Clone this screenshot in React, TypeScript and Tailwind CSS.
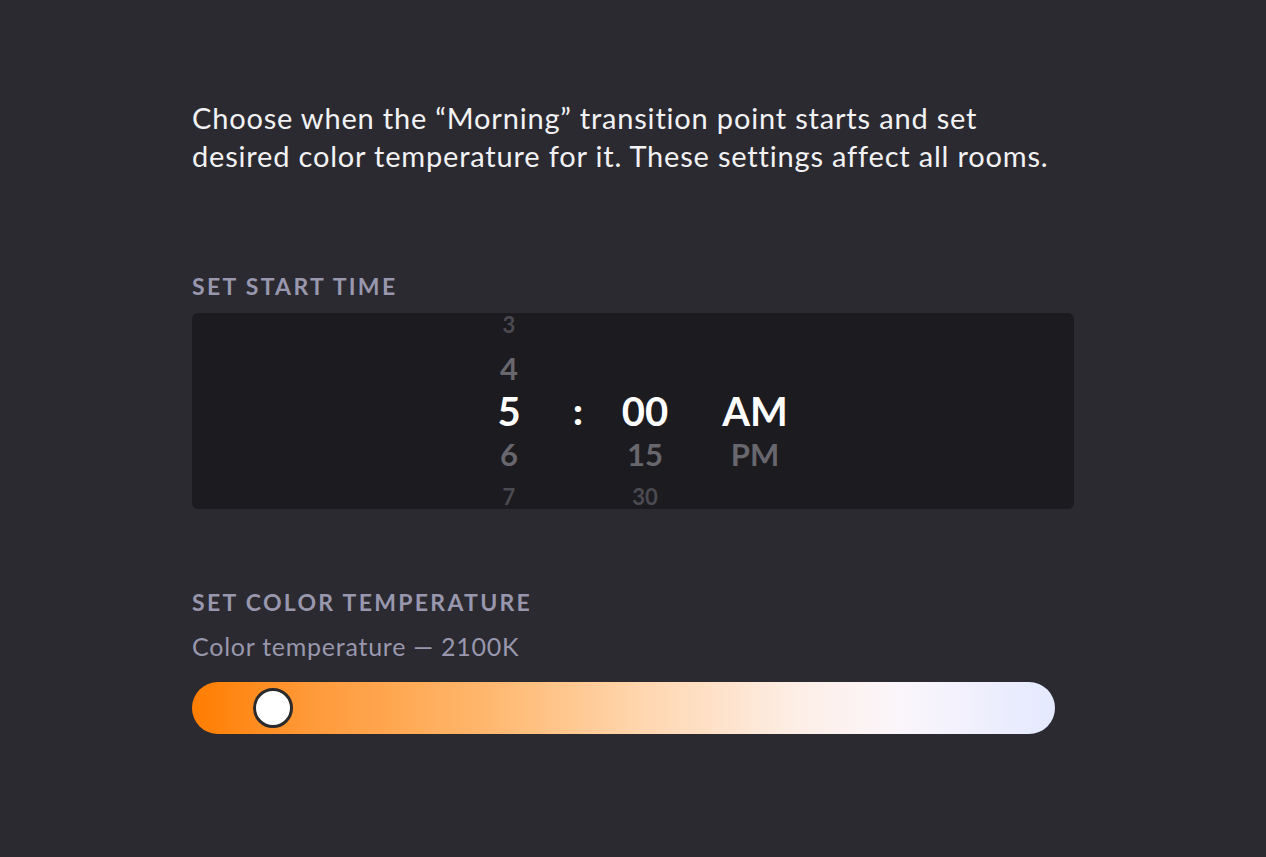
import React from "react";

const FONT = { fontFamily: "Lato, 'Open Sans', Arial, sans-serif" };

type Cell = { text: string; tone: "far" | "near" | "active" | "none" };

const HOURS: Cell[] = [
  { text: "3", tone: "far" },
  { text: "4", tone: "near" },
  { text: "5", tone: "active" },
  { text: "6", tone: "near" },
  { text: "7", tone: "far" },
];

const MINUTES: Cell[] = [
  { text: "", tone: "none" },
  { text: "", tone: "none" },
  { text: "00", tone: "active" },
  { text: "15", tone: "near" },
  { text: "30", tone: "far" },
];

const PERIOD: Cell[] = [
  { text: "", tone: "none" },
  { text: "", tone: "none" },
  { text: "AM", tone: "active" },
  { text: "PM", tone: "near" },
  { text: "", tone: "none" },
];

function toneClass(tone: Cell["tone"]) {
  if (tone === "active") return "text-[40px] text-white";
  if (tone === "near") return "text-[31px] text-[#68676d]";
  if (tone === "far") return "text-[22px] text-[#4b4a50]";
  return "";
}

function Wheel({ cells, width }: { cells: Cell[]; width: string }) {
  return (
    <div className={`flex h-full flex-col items-center justify-center ${width}`}>
      {cells.map((c, i) => (
        <div
          key={i}
          className={`flex h-[43px] shrink-0 items-center justify-center font-bold leading-none ${toneClass(c.tone)}`}
        >
          {c.text}
        </div>
      ))}
    </div>
  );
}

export default function App() {
  return (
    <div className="min-h-[857px] w-full bg-[#2b2a30]" style={FONT}>
      <div className="pl-[192px] pt-[99px]">
        <p className="w-[1000px] text-[29px] leading-[38px] tracking-[0.028em] text-[#f2f2f4]">
          Choose when the “Morning” transition point starts and set
          <br />
          desired color temperature for it. These settings affect all rooms.
        </p>

        <h2 className="mt-[97px] text-[23px] font-bold leading-[28px] tracking-[0.1em] text-[#9897ae]">
          SET START TIME
        </h2>

        <div className="mt-[13px] flex h-[196px] w-[882px] overflow-hidden rounded-[6px] bg-[#1c1b20] pl-[287px]">
          <Wheel cells={HOURS} width="w-[60px]" />
          <div className="ml-[29px] flex w-[20px] items-center justify-center pb-[3px] text-[38px] font-black leading-none text-white">
            :
          </div>
          <div className="ml-[22px]">
            <Wheel cells={MINUTES} width="w-[70px]" />
          </div>
          <div className="ml-[25px]">
            <Wheel cells={PERIOD} width="w-[100px]" />
          </div>
        </div>

        <h2 className="mt-[79px] text-[23px] font-bold leading-[28px] tracking-[0.1em] text-[#9897ae]">
          SET COLOR TEMPERATURE
        </h2>
        <p className="mt-[15px] text-[25px] leading-[30px] tracking-[0.03em] text-[#9897ae]">
          Color temperature — 2100K
        </p>

        <div className="relative mt-[21px] h-[52px] w-[863px] rounded-full bg-[linear-gradient(90deg,#ff7d00_0%,#ff9a3a_14%,#ffb76d_34%,#ffd6ae_52%,#fdeee6_70%,#fbf6fb_82%,#e4e9ff_100%)]">
          <div className="absolute left-[61px] top-[6px] h-[40px] w-[40px] rounded-full border-[3px] border-[#2a2a2c] bg-white" />
        </div>
      </div>
    </div>
  );
}
